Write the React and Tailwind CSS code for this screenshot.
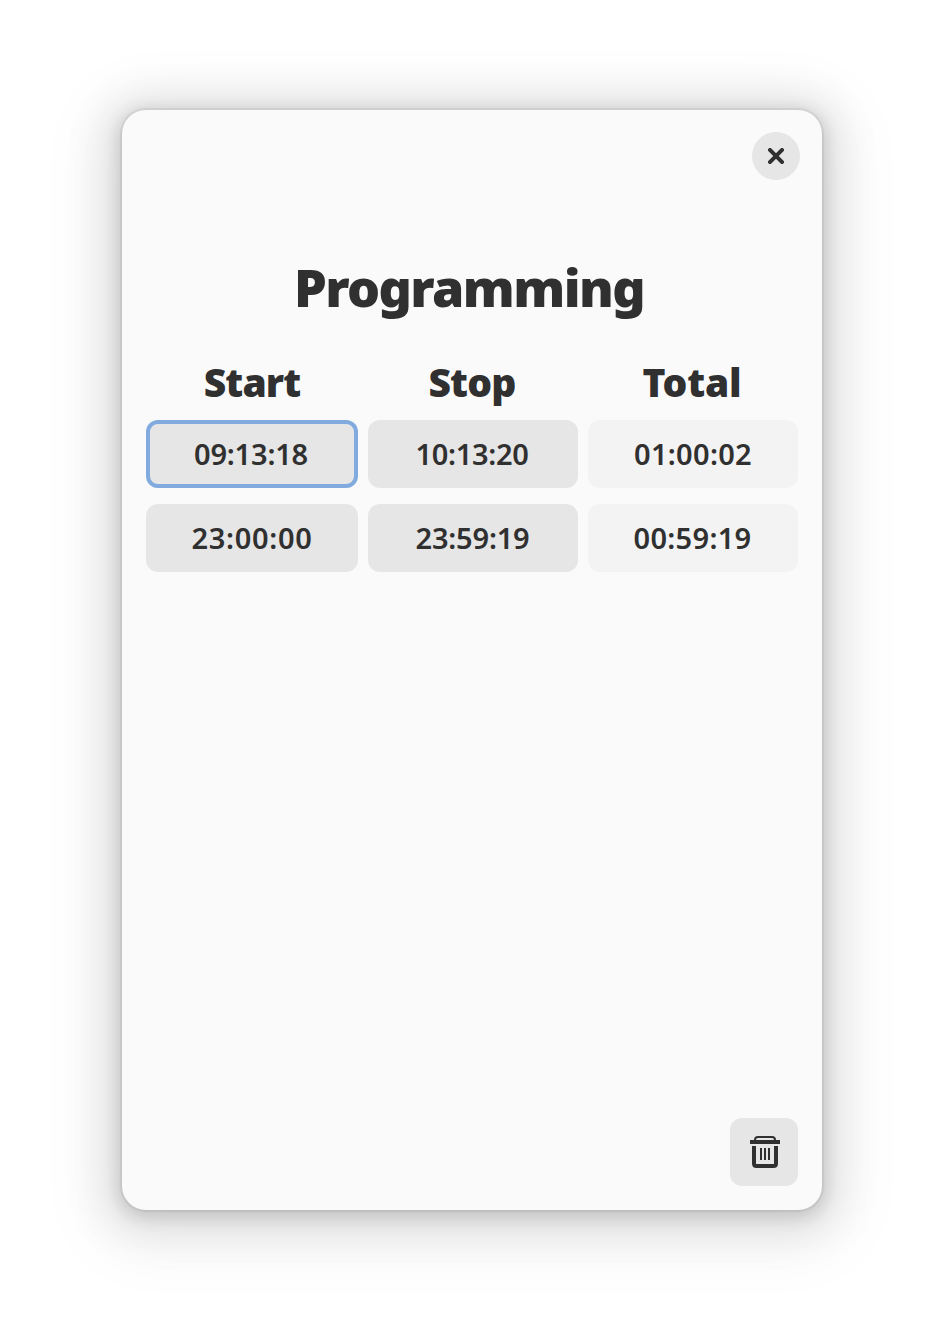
const rows = [
  [
    { time: "09:13:18", tracking: "mr-0.5 tracking-[-0.2px]" },
    { time: "10:13:20", tracking: "tracking-[-0.3px] mr-0.5" },
    { time: "01:00:02", tracking: "tracking-[0.3px]" },
  ],
  [
    { time: "23:00:00", tracking: "tracking-[0.7px]" },
    { time: "23:59:19", tracking: "mr-px tracking-[-0.2px]" },
    { time: "00:59:19", tracking: "mr-px tracking-[0.3px]" },
  ],
];

function TimeCell({ cell, muted, focused }) {
  return (
    <button
      disabled={muted}
      className={`flex h-[68px] items-center justify-center rounded-xl pb-0.5 text-[29px] leading-none font-semibold ${
        muted ? "bg-[#f3f3f3]" : "bg-[#e6e6e6]"
      } ${focused ? "inset-ring-4 inset-ring-[#81abdf]" : ""}`}
    >
      <span className={`whitespace-nowrap ${cell.tracking}`}>{cell.time}</span>
    </button>
  );
}

export default function App() {
  return (
    <div className="flex h-[1344px] w-[944px] justify-center bg-white pt-[110px] font-['Noto_Sans','Open_Sans',sans-serif] text-[#303030]">
      <main className="flex h-[1100px] w-[700px] flex-col rounded-3xl bg-[#fafafa] px-6 pb-6 shadow-[0_4px_16px_4px_rgba(0,0,0,0.13),0_6px_40px_20px_rgba(0,0,0,0.09),0_12px_64px_32px_rgba(0,0,0,0.04),0_0_0_2px_rgba(0,0,0,0.05)]">
        <header className="-mr-0.5 flex justify-end pt-[22px]">
          <button aria-label="Close" className="flex size-12 items-center justify-center rounded-full bg-[#e6e6e6]">
            <svg viewBox="0 0 16 16" className="size-4" fill="none" stroke="currentColor" strokeWidth="4">
              <path d="M0.6 0.6L15.4 15.4M15.4 0.6L0.6 15.4" />
            </svg>
          </button>
        </header>
        <h1 className="mt-[72px] h-[72px] pr-1.5 text-center text-[52px] leading-[70px] font-black">
          <span className="tracking-[-1.6px]">Programming</span>
        </h1>
        <div className="mt-[32px] grid grid-cols-[212px_210px_210px] gap-x-2.5 text-center text-[39px] leading-[52px] font-black">
          <h2 className="tracking-[-0.9px]">Start</h2>
          <h2 className="pr-0.5 tracking-[-0.8px]">Stop</h2>
          <h2 className="pr-0.5 tracking-[-0.2px]">Total</h2>
        </div>
        <div className="mt-3 grid grid-cols-[212px_210px_210px] gap-x-2.5 gap-y-4">
          {rows.map((row, r) =>
            row.map((cell, c) => (
              <TimeCell key={cell.time} cell={cell} muted={c === 2} focused={r === 0 && c === 0} />
            ))
          )}
        </div>
        <footer className="mt-auto flex justify-end">
          <button aria-label="Delete" className="flex size-[68px] items-center justify-center rounded-xl bg-[#e6e6e6]">
            <svg viewBox="0 0 32 32" className="ml-1 size-8" fill="none" stroke="currentColor">
              <path d="M0 6H30" strokeWidth="4" />
              <path d="M5 5V4Q5 1 8 1H22Q25 1 25 4V5" strokeWidth="2" />
              <path d="M4 10V27.5Q4 30 6.5 30H23.5Q26 30 26 27.5V10" strokeWidth="4" />
              <path d="M11 12V24M15 12V24M19 12V24" strokeWidth="2" />
            </svg>
          </button>
        </footer>
      </main>
    </div>
  );
}
